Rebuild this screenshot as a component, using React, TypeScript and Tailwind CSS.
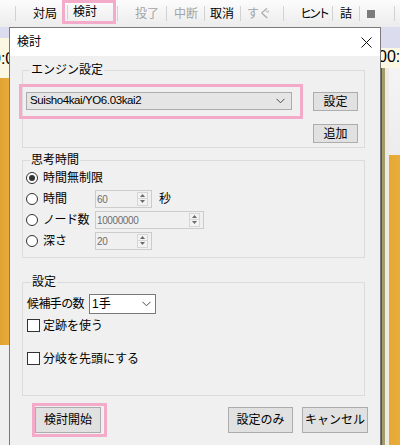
import React from "react";

const font = "font-['Liberation_Sans','Noto_Sans_CJK_JP',sans-serif]";

function Sep({ className = "" }: { className?: string }) {
  return <span className={`h-[15px] w-px shrink-0 bg-[#d2d2d2] ${className}`} />;
}

function Toolbar() {
  return (
    <div className="flex h-[27px] items-center bg-gradient-to-b from-[#fcfcfc] to-[#ececec] text-[12px] leading-none">
      <Sep className="ml-[15px]" />
      <span className="ml-[17px] w-[24px] text-black">対局</span>
      <div className="ml-[5px] flex h-[24px] w-[54px] shrink-0 items-center self-start border-[3px] border-[#f3abc9]">
        <Sep className="ml-[2px]" />
        <span className="ml-[5px] w-[24px] text-black">検討</span>
      </div>
      <Sep className="ml-[1px]" />
      <span className="ml-[17px] w-[24px] text-[#a3a3a3]">投了</span>
      <Sep className="ml-[7px]" />
      <span className="ml-[7px] w-[24px] text-[#a3a3a3]">中断</span>
      <Sep className="ml-[6px]" />
      <span className="ml-[5px] w-[24px] text-black">取消</span>
      <Sep className="ml-[6px]" />
      <span className="ml-[6px] w-[24px] text-[#a3a3a3]">すぐ</span>
      <Sep className="ml-[12px]" />
      <span className="ml-[16px] w-[26px] whitespace-nowrap tracking-[-3px] text-black">ヒント</span>
      <Sep className="ml-[6px]" />
      <span className="ml-[7px] w-[12px] text-black">詰</span>
      <Sep className="ml-[7px]" />
      <span className="ml-[7px] h-[8px] w-[8px] shrink-0 bg-[#7b7b7b]" />
      <Sep className="ml-[19px]" />
    </div>
  );
}

function Backdrop() {
  return (
    <div className="flex h-[418px]">
      <div className="flex w-[9px] flex-col overflow-hidden">
        <div className="h-[11px] bg-[#dcdcef]" />
        <div className="flex h-[40px] items-end bg-[#fbf7e3] pb-[11px]">
          <span className="-ml-[8px] whitespace-nowrap text-[16px] leading-none text-black">0:00</span>
        </div>
        <div className="h-[267px] bg-gradient-to-r from-[#e0a233] to-[#e8ac3a]" />
        <div className="flex-1 bg-[#f0f0f0]" />
      </div>
      <div className="flex-1 bg-[#f0f0f0]" />
      <div className="flex w-[19px] flex-col overflow-hidden">
        <div className="h-[21px] bg-[#dcdcef]" />
        <div className="flex h-[20px] items-end bg-[#fbf7e3] pb-[3px]">
          <span className="-ml-[3px] whitespace-nowrap text-[16px] leading-none text-black">00:00</span>
        </div>
        <div className="flex flex-1">
          <div className="w-[1px] bg-[#5f5630]" />
          <div className="w-[3px] bg-[#a49b6a]" />
          <div className="w-[4px] bg-[#ebeae4]" />
          <div className="flex flex-1 flex-col">
            <div className="h-[87px] bg-gradient-to-b from-[#f4f4f4] to-[#ececec]" />
            <div className="flex-1 bg-gradient-to-r from-[#e6a832] to-[#eaad3c]" />
          </div>
        </div>
      </div>
    </div>
  );
}

function Chevron() {
  return (
    <svg width="9" height="6" viewBox="0 0 9 6" className="shrink-0">
      <polyline points="0.5,0.8 4.5,4.8 8.5,0.8" fill="none" stroke="#4a4a4a" strokeWidth="1" />
    </svg>
  );
}

function Button({ label, className = "" }: { label: string; className?: string }) {
  return (
    <div
      className={`flex items-center justify-center border border-[#adadad] bg-[#e1e1e1] text-[12px] leading-none text-black ${className}`}
    >
      {label}
    </div>
  );
}

function Spin() {
  return (
    <div className="mr-[3px] flex w-[11px] flex-col border border-[#d6d6d6] bg-[#f3f3f3]">
      <div className="flex flex-1 items-center justify-center border-b border-[#d6d6d6]">
        <svg width="5" height="3" viewBox="0 0 5 3">
          <polygon points="0,3 2.5,0 5,3" fill="#6a6a6a" />
        </svg>
      </div>
      <div className="flex flex-1 items-center justify-center">
        <svg width="5" height="3" viewBox="0 0 5 3">
          <polygon points="0,0 2.5,3 5,0" fill="#6a6a6a" />
        </svg>
      </div>
    </div>
  );
}

function NumBox({ value, width }: { value: string; width: string }) {
  return (
    <div className={`flex h-[18px] items-stretch border border-[#cccccc] bg-[#f0f0f0] py-[1px] ${width}`}>
      <span className="flex-1 pl-[1px] text-[10px] leading-[15px] tracking-[-0.4px] text-[#6d6d6d]">{value}</span>
      <Spin />
    </div>
  );
}

function Radio({ checked = false }: { checked?: boolean }) {
  return (
    <span className="flex h-[12px] w-[12px] shrink-0 items-center justify-center rounded-full border border-[#333333] bg-white">
      {checked && <span className="h-[6px] w-[6px] rounded-full bg-[#333333]" />}
    </span>
  );
}

function Checkbox() {
  return <span className="h-[13px] w-[13px] shrink-0 border border-[#333333] bg-white" />;
}

const legend = "ml-[4px] px-[1px] text-[12px] leading-[14px] text-black";
const fieldset = "w-[343px] border border-[#dcdcdc]";

export default function App() {
  return (
    <div className={`relative h-[445px] w-[400px] overflow-hidden bg-[#f0f0f0] ${font}`}>
      <Toolbar />
      <Backdrop />

      <div className="absolute left-[9px] top-[27px] h-[425px] w-[372px] border border-[#7a7a7a] bg-[#f0f0f0]">
        <div className="flex h-[28px] items-center justify-between bg-white pl-[7px] pr-[8px]">
          <span className="text-[12px] leading-none text-black">検討</span>
          <svg width="11" height="11" viewBox="0 0 11 11">
            <path d="M0.5 0.5 L10.5 10.5 M10.5 0.5 L0.5 10.5" stroke="#111111" strokeWidth="1" />
          </svg>
        </div>

        <div className="pl-[12px] pt-[7px]">
          <fieldset className={`${fieldset} pb-[4px] pl-[3px] pr-[6px] pt-[15px]`}>
            <legend className={legend}>エンジン設定</legend>
            <div className="flex items-start justify-between">
              <div className="relative">
                <div className="flex h-[18px] w-[266px] items-center justify-between border border-[#acacac] bg-[#e5e5e5] pl-[3px] pr-[6px]">
                  <span className="text-[11.5px] leading-none tracking-[-0.4px] text-black">Suisho4kai/YO6.03kai2</span>
                  <Chevron />
                </div>
                <div className="pointer-events-none absolute -bottom-[9px] -left-[7px] -right-[11px] -top-[8px] border-[3px] border-[#f3abc9]" />
              </div>
              <div className="flex flex-col gap-[13px]">
                <Button label="設定" className="h-[19px] w-[45px]" />
                <Button label="追加" className="h-[19px] w-[45px]" />
              </div>
            </div>
          </fieldset>

          <fieldset className={`${fieldset} mt-[5px] pb-[6px] pl-[3px]`}>
            <legend className={legend}>思考時間</legend>
            <div className="flex h-[21px] items-center">
              <Radio checked />
              <span className="ml-[5px] text-[12px] leading-none text-black">時間無制限</span>
            </div>
            <div className="flex h-[21px] items-center">
              <div className="flex w-[69px] items-center">
                <Radio />
                <span className="ml-[5px] text-[12px] leading-none text-black">時間</span>
              </div>
              <NumBox value="60" width="w-[57px]" />
              <span className="ml-[7px] text-[12px] leading-none text-black">秒</span>
            </div>
            <div className="flex h-[21px] items-center">
              <div className="flex w-[69px] items-center">
                <Radio />
                <span className="ml-[5px] text-[12px] leading-none tracking-[-0.5px] text-black">ノード数</span>
              </div>
              <NumBox value="10000000" width="w-[109px]" />
            </div>
            <div className="flex h-[21px] items-center">
              <div className="flex w-[69px] items-center">
                <Radio />
                <span className="ml-[5px] text-[12px] leading-none text-black">深さ</span>
              </div>
              <NumBox value="20" width="w-[57px]" />
            </div>
          </fieldset>

          <fieldset className={`${fieldset} mt-[17px] pb-[30px] pl-[4px] pt-[5px]`}>
            <legend className={legend}>設定</legend>
            <div className="flex h-[20px] items-center">
              <span className="w-[62px] whitespace-nowrap text-[12px] leading-none tracking-[-0.6px] text-black">候補手の数</span>
              <div className="flex h-[20px] w-[67px] items-center justify-between border border-[#7a7a7a] bg-white pl-[2px] pr-[4px]">
                <span className="text-[12px] leading-none text-black">1手</span>
                <Chevron />
              </div>
            </div>
            <div className="mt-[5px] flex h-[13px] items-center">
              <Checkbox />
              <span className="ml-[3px] text-[12px] leading-none text-black">定跡を使う</span>
            </div>
            <div className="mt-[20px] flex h-[13px] items-center">
              <Checkbox />
              <span className="ml-[3px] text-[12px] leading-none text-black">分岐を先頭にする</span>
            </div>
          </fieldset>

          <div className="mt-[11px] flex items-center">
            <div className="relative ml-[13px]">
              <Button label="検討開始" className="h-[26px] w-[66px]" />
              <div className="pointer-events-none absolute -bottom-[4px] -left-[3px] -right-[6px] -top-[4px] border-[3px] border-[#f3abc9]" />
            </div>
            <Button label="設定のみ" className="ml-[127px] h-[26px] w-[65px]" />
            <Button label="キャンセル" className="ml-[9px] h-[26px] w-[66px]" />
          </div>
        </div>
      </div>
    </div>
  );
}
